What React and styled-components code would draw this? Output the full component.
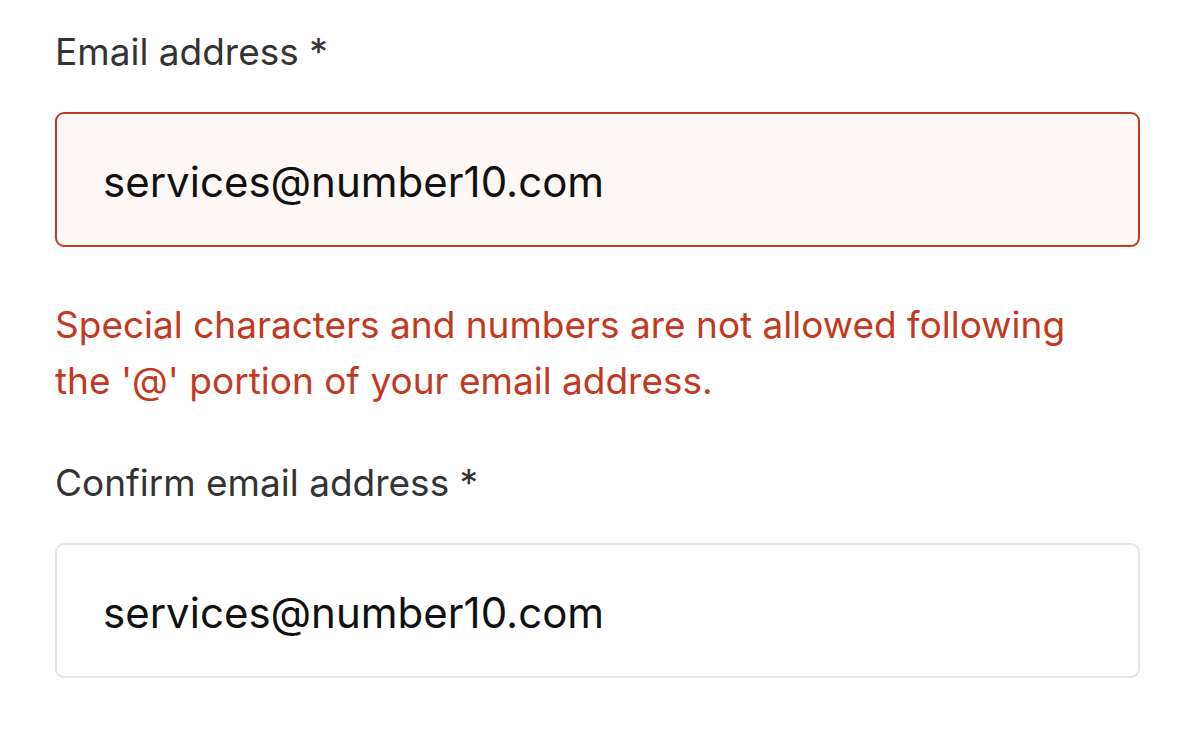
import React from 'react';
import styled, { createGlobalStyle } from 'styled-components';

const GlobalStyle = createGlobalStyle`
   html, body {
      margin:0;
      padding:0;
      background:#ffffff;
   }
   body {
      font-family: Inter, "Liberation Sans", sans-serif;
   }
`

const StyledForm = styled.form`
   width:1085px;
   padding:24px 0 0 55px;
   display:flex;
   flex-direction:column;
`

const StyledField = styled.div`
   display:flex;
   flex-direction:column;
`

const StyledLabel = styled.label`
   font-size:37px;
   line-height:56px;
   color:#333333;
   margin-bottom:32px;
`

const StyledInput = styled.input`
   box-sizing:border-box;
   width:100%;
   height:135px;
   padding:4px 0 0 46px;
   font-family: Inter, "Liberation Sans", sans-serif;
   font-size:42px;
   color:#111111;
   border-radius:9px;
   border:2px solid ${props => props.invalid ? '#c2391f' : '#e4e4e4'};
   background-color:${props => props.invalid ? '#fdf8f6' : '#ffffff'};
   outline:none;
`

const StyledError = styled.p`
   margin:50px 0 46px 0;
   font-size:37px;
   line-height:56px;
   color:#c2391f;
   max-width:1030px;
`

const App = () => {
   return(
      <React.Fragment>
         <GlobalStyle/>
         <StyledForm>
            <StyledField>
               <StyledLabel>Email address *</StyledLabel>
               <StyledInput invalid defaultValue="services@number10.com"/>
               <StyledError>Special characters and numbers are not allowed following the '@' portion of your email address.</StyledError>
            </StyledField>
            <StyledField>
               <StyledLabel>Confirm email address *</StyledLabel>
               <StyledInput defaultValue="services@number10.com"/>
            </StyledField>
         </StyledForm>
      </React.Fragment>
   )
}

export default App
